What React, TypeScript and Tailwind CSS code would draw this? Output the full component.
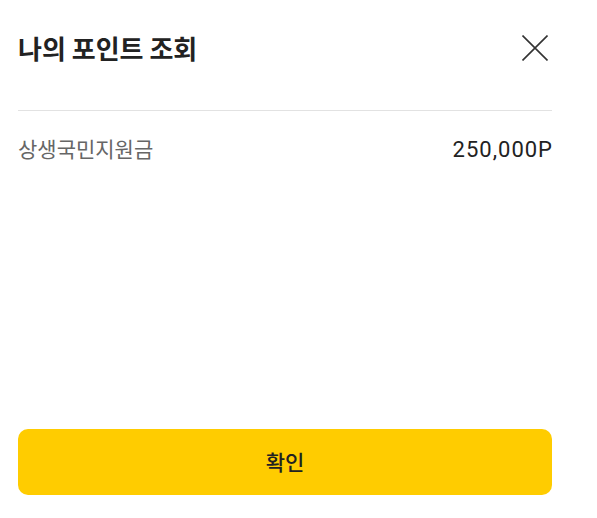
import React from "react";

export default function App() {
  return (
    <div
      className="w-[597px] h-[518px] bg-white flex flex-col pl-[18px] pr-[45px]"
      style={{ fontFamily: '"Noto Sans CJK KR", "Noto Sans", sans-serif' }}
    >
      <div className="flex items-center justify-between mt-[22px] h-[52px]">
        <h1 className="text-[26px] font-bold text-[#222] leading-none">나의 포인트 조회</h1>
        <button className="w-[26px] h-[26px] flex items-center justify-center mr-[4px]">
          <svg width="26" height="26" viewBox="0 0 26 26" fill="none" stroke="#333" strokeWidth="1.6">
            <path d="M0.5 0.5L25.5 25.5M25.5 0.5L0.5 25.5" />
          </svg>
        </button>
      </div>
      <div className="h-[1px] bg-[#e2e2e2] mt-[36px]" />
      <div className="flex items-center justify-between mt-[26px] h-[22px]">
        <span className="text-[21px] text-[#666] leading-none">상생국민지원금</span>
        <span
          className="text-[22px] text-[#222] leading-none tracking-[1px] mr-[-1px] pt-[3px]"
          style={{ fontFamily: 'Roboto, "Noto Sans CJK KR", sans-serif' }}
        >
          250,000P
        </span>
      </div>
      <div className="flex-1" />
      <button className="h-[66px] mb-[23px] rounded-[10px] bg-[#ffcc00] text-[21px] font-medium text-[#222]">
        확인
      </button>
    </div>
  );
}
